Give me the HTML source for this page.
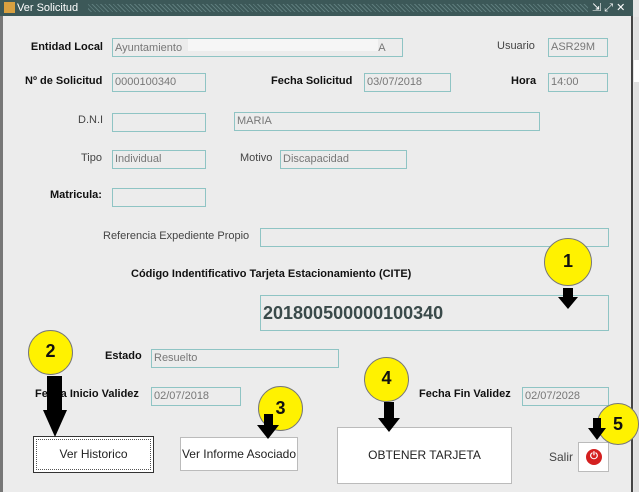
<!DOCTYPE html>
<html><head><meta charset="utf-8"><style>
*{margin:0;padding:0;box-sizing:border-box}
body{width:639px;height:492px;overflow:hidden;background:#e6e6e6;font-family:"Liberation Sans",sans-serif;position:relative}
.a{position:absolute}
.win{left:0;top:0;width:633px;height:492px;background:#ececec;border-left:3px solid #777;border-right:2px solid #444}
.tb{left:0;top:0;width:633px;height:16px;background:#3c5858;color:#fff;font-size:11px;line-height:16px}
.f{position:absolute;border:1px solid #8fc4c4;background:#ececec;color:#777;font-size:11px;line-height:17px;padding-left:2px;white-space:nowrap;overflow:hidden}
.l{position:absolute;font-size:11px;color:#333;white-space:nowrap}
.b{font-weight:bold;color:#111}
.r{text-align:right}
.c{position:absolute;border-radius:50%;background:#fff200;border:1px solid #777;font-weight:bold;font-size:18px;text-align:center;color:#111}
.btn{position:absolute;background:#fff;border:1px solid #bbb;font-size:12px;color:#222;text-align:center}
</style></head><body>
<div class="a win"></div>
<div class="a tb"><span style="display:inline-block;width:11px;height:11px;background:#d8a040;margin:2px 2px 0 4px;vertical-align:top"></span>Ver Solicitud
<span class="a" style="left:88px;top:4px;width:500px;height:8px;background:repeating-linear-gradient(45deg,#3c5858 0 2px,#5d7c7c 2px 3px)"></span>
<span class="a" style="left:592px;top:0;font-size:11px">⇲ ⤢ ✕</span></div>
<div class="a" style="left:634px;top:17px;width:5px;height:475px;background:#e0e0e0"></div>
<div class="a" style="left:634px;top:60px;width:5px;height:22px;background:#fff"></div>

<div class="l b r" style="right:536px;top:41px">Entidad Local</div>
<div class="f" style="left:112px;top:38px;width:291px;height:19px">Ayuntamiento &nbsp;<span style="display:inline-block;width:190px;height:12px;background:#f6f6f6"></span>A</div>
<div class="l" style="left:497px;top:40px;color:#444">Usuario</div>
<div class="f" style="left:548px;top:38px;width:60px;height:19px">ASR29M</div>

<div class="l b" style="left:25px;top:75px">Nº de Solicitud</div>
<div class="f" style="left:112px;top:73px;width:94px;height:19px">0000100340</div>
<div class="l b" style="left:271px;top:75px">Fecha Solicitud</div>
<div class="f" style="left:364px;top:73px;width:87px;height:19px">03/07/2018</div>
<div class="l b" style="left:511px;top:75px">Hora</div>
<div class="f" style="left:548px;top:73px;width:60px;height:19px">14:00</div>

<div class="l" style="left:78px;top:114px;color:#444">D.N.I</div>
<div class="f" style="left:112px;top:113px;width:94px;height:19px"></div>
<div class="f" style="left:234px;top:112px;width:306px;height:19px">MARIA</div>

<div class="l" style="left:81px;top:152px;color:#444">Tipo</div>
<div class="f" style="left:112px;top:150px;width:94px;height:19px">Individual</div>
<div class="l" style="left:240px;top:152px;color:#444">Motivo</div>
<div class="f" style="left:280px;top:150px;width:127px;height:19px">Discapacidad</div>

<div class="l b" style="left:50px;top:189px">Matricula:</div>
<div class="f" style="left:112px;top:188px;width:94px;height:19px"></div>

<div class="l" style="left:103px;top:230px;color:#444">Referencia Expediente Propio</div>
<div class="f" style="left:260px;top:228px;width:349px;height:19px"></div>

<div class="l b" style="left:131px;top:268px">Código Indentificativo Tarjeta Estacionamiento (CITE)</div>
<div class="f" style="left:260px;top:295px;width:349px;height:36px;font-size:18px;line-height:34px;font-weight:bold;color:#3a4a4a">201800500000100340</div>

<div class="l b" style="left:105px;top:350px">Estado</div>
<div class="f" style="left:151px;top:349px;width:188px;height:19px">Resuelto</div>
<div class="l b" style="left:35px;top:388px">Fecha Inicio Validez</div>
<div class="f" style="left:151px;top:387px;width:90px;height:19px">02/07/2018</div>
<div class="l b" style="left:419px;top:388px">Fecha Fin Validez</div>
<div class="f" style="left:522px;top:387px;width:87px;height:19px">02/07/2028</div>

<div class="btn" style="left:33px;top:436px;width:121px;height:37px;border:1px solid #333;outline:1px dotted #555;outline-offset:-4px;line-height:35px">Ver Historico</div>
<div class="btn" style="left:180px;top:437px;width:118px;height:34px;line-height:32px">Ver Informe Asociado</div>
<div class="btn" style="left:337px;top:427px;width:175px;height:57px;line-height:55px">OBTENER TARJETA</div>
<div class="l" style="left:549px;top:450px;color:#444;font-size:12px">Salir</div>
<div class="btn" style="left:578px;top:442px;width:31px;height:30px"><span class="a" style="left:7px;top:6px;width:16px;height:16px;border-radius:50%;background:#d42020;color:#fff;font-size:10px;line-height:16px;font-weight:bold">⏻</span></div>

<div class="c" style="left:544px;top:238px;width:48px;height:48px;line-height:44px">1</div>
<div class="c" style="left:28px;top:330px;width:45px;height:45px;line-height:40px">2</div>
<div class="c" style="left:258px;top:386px;width:45px;height:45px;line-height:42px">3</div>
<div class="c" style="left:364px;top:357px;width:45px;height:45px;line-height:40px">4</div>
<div class="c" style="left:597px;top:403px;width:42px;height:42px;line-height:40px">5</div>
<svg class="a" style="left:0;top:0" width="639" height="492">
<g fill="#000">
<polygon points="563,288 573,288 573,297 578,297 568,309 558,297 563,297"/>
<polygon points="47,376 62,376 62,410 67,410 55,437 43,410 47,410"/>
<polygon points="264,414 273,414 273,425 279,425 268,439 257,425 264,425"/>
<polygon points="384,402 394,402 394,418 400,418 389,432 378,418 384,418"/>
<polygon points="593,418 601,418 601,428 606,428 597,440 588,428 593,428"/>
</g></svg>
</body></html>
